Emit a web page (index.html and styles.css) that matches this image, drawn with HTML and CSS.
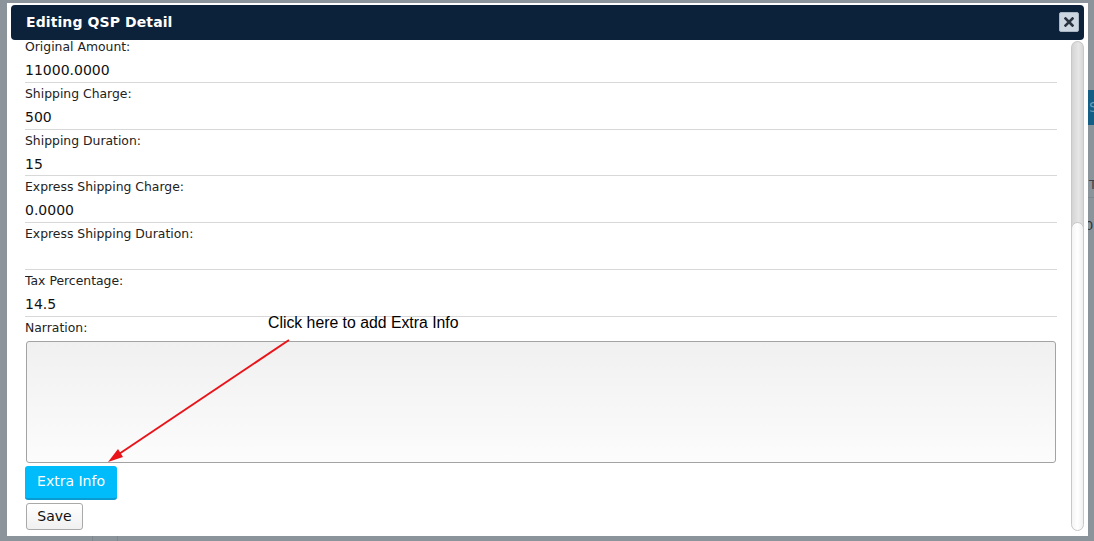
FILE: index.html
```html
<!DOCTYPE html>
<html>
<head>
<meta charset="utf-8">
<link rel="stylesheet" href="styles.css">
</head>
<body>
<div class="backdrop">
  <div class="bg-strip">
    <div class="bg-blue">S</div>
    <div class="bg-t">T</div>
    <div class="bg-o">0</div>
  </div>
  <div class="bg-bottom">
    <span class="seg seg1"></span>
    <span class="seg seg2"></span>
  </div>
</div>

<div class="dialog">
  <div class="titlebar">
    <span class="title">Editing QSP Detail</span>
    <button class="close" aria-label="close">
      <svg width="10" height="10" viewBox="0 0 10 10"><path d="M1.5 1.5 L8.5 8.5 M8.5 1.5 L1.5 8.5" stroke="#2a3440" stroke-width="2.6" stroke-linecap="square"/></svg>
    </button>
  </div>
  <div class="body">
    <div class="content">
      <div class="list">
        <div class="row"><div class="label">Original Amount:</div><div class="value">11000.0000</div></div>
        <div class="row"><div class="label">Shipping Charge:</div><div class="value">500</div></div>
        <div class="row"><div class="label">Shipping Duration:</div><div class="value">15</div></div>
        <div class="row"><div class="label">Express Shipping Charge:</div><div class="value">0.0000</div></div>
        <div class="row"><div class="label">Express Shipping Duration:</div><div class="value"></div></div>
        <div class="row"><div class="label">Tax Percentage:</div><div class="value">14.5</div></div>
        <div class="label">Narration:</div>
        <textarea class="narration"></textarea>
        <button class="btn-extra">Extra Info</button>
        <button class="btn-save">Save</button>
      </div>
    </div>
    <div class="scrollbar">
      <div class="scroll-upper"></div>
      <div class="scroll-thumb"></div>
    </div>
  </div>
</div>

<div class="note">Click here to add Extra Info</div>
<svg class="arrow" width="1094" height="541" viewBox="0 0 1094 541">
  <line x1="289" y1="340" x2="116" y2="456" stroke="#e8141a" stroke-width="2"/>
  <polygon points="108,462 118,449 123,457" fill="#e8141a"/>
</svg>
</body>
</html>
```

FILE: styles.css
```css
html, body {
  margin: 0;
  padding: 0;
}
body {
  width: 1094px;
  height: 541px;
  background: #8b939b;
  position: relative;
  overflow: hidden;
  font-family: "DejaVu Sans", Verdana, sans-serif;
}

.backdrop {
  position: absolute;
  inset: 0;
}
.bg-strip {
  position: absolute;
  left: 1088px;
  top: 0;
  width: 6px;
  height: 541px;
}
.bg-blue {
  margin-top: 90px;
  height: 35px;
  background: #145d85;
  color: #6f9ab2;
  font-size: 14px;
  line-height: 35px;
  padding-left: 1px;
  overflow: hidden;
}
.bg-t {
  margin-top: 52px;
  font-size: 13px;
  color: #3b4148;
  padding-left: 1px;
  height: 20px;
  border-bottom: 1px solid #7f878f;
}
.bg-o {
  margin-top: 20px;
  font-size: 13px;
  color: #2d343a;
  margin-left: -3px;
}
.bg-bottom {
  position: absolute;
  left: 0;
  top: 536px;
  width: 1094px;
  height: 5px;
}
.seg {
  position: absolute;
  top: 0;
  height: 5px;
  background: #7f878f;
}
.seg1 { left: 92px; width: 1px; }
.seg2 { left: 117px; width: 1px; }

.dialog {
  position: absolute;
  left: 7px;
  top: 3px;
  width: 1081px;
  height: 533px;
  background: #fff;
  box-sizing: border-box;
  display: flex;
  flex-direction: column;
}

.titlebar {
  margin: 2px 4px 0 4px;
  height: 35px;
  background: #0c213a;
  border-radius: 4px;
  display: flex;
  align-items: center;
  justify-content: space-between;
  padding: 0 5px 0 15px;
  box-sizing: border-box;
  flex: none;
}
.title {
  color: #fff;
  font-weight: bold;
  font-size: 14px;
  letter-spacing: 0.1px;
  margin-top: -2px;
}
.close {
  width: 20px;
  height: 20px;
  padding: 0;
  margin: 0;
  border: 1px solid #aab6c4;
  border-radius: 2px;
  background: #ccd6e1;
  display: flex;
  align-items: center;
  justify-content: center;
  margin-top: -1px;
}
.close svg { display: block; }

.body {
  flex: 1;
  display: flex;
  min-height: 0;
}
.content {
  width: 1032px;
  margin-left: 18px;
  overflow: hidden;
}
.list {
  margin-top: -4px;
  display: flex;
  flex-direction: column;
  align-items: flex-start;
}
.row {
  width: 1032px;
  height: 46.8px;
  box-sizing: border-box;
  border-bottom: 1px solid #d8d8d8;
}
.label {
  height: 22px;
  line-height: 22px;
  font-size: 12.4px;
  color: #222;
}
.value {
  height: 23.8px;
  line-height: 24px;
  font-size: 14px;
  color: #111;
}
.narration {
  display: block;
  margin: 2.2px 0 0 1px;
  width: 1030px;
  height: 122px;
  box-sizing: border-box;
  border: 1px solid #a3a3a3;
  border-radius: 3px;
  background: linear-gradient(#f0f0f0, #fcfcfc);
  resize: none;
  padding: 0;
}
.btn-extra {
  margin-top: 3px;
  width: 92px;
  height: 34px;
  box-sizing: border-box;
  background: #00bcfa;
  border: 0;
  border-bottom: 2px solid #0a9bd2;
  border-radius: 3px;
  color: #fff;
  font-family: "DejaVu Sans", sans-serif;
  font-size: 14px;
  padding: 0 0 1px 0;
}
.btn-save {
  margin-top: 3px;
  margin-left: 1px;
  width: 57px;
  height: 27px;
  box-sizing: border-box;
  background: linear-gradient(#ffffff, #f0f0f0);
  border: 1px solid #a9a9a9;
  border-radius: 3px;
  color: #111;
  font-family: "DejaVu Sans", sans-serif;
  font-size: 14px;
  padding: 0 0 1px 0;
}

.scrollbar {
  margin: 1px 0 0 14px;
  width: 13px;
  height: 490px;
  position: relative;
  display: flex;
  flex-direction: column;
}
.scroll-upper {
  height: 190px;
  background: linear-gradient(90deg, #d4d4d4, #e6e6e6 60%, #d6d6d6);
  border: 1px solid #c8c8c8;
  border-bottom: 0;
  border-radius: 7px 7px 0 0;
  box-sizing: border-box;
}
.scroll-thumb {
  flex: 1;
  margin-top: -9px;
  background: linear-gradient(90deg, #f4f4f4, #ffffff 50%, #f0f0f0);
  border: 1px solid #c8c8c8;
  border-radius: 7px;
  box-sizing: border-box;
}

.note {
  position: absolute;
  left: 268px;
  top: 313px;
  font-family: "Liberation Sans", Arial, sans-serif;
  font-size: 15.8px;
  color: #000;
  line-height: 20px;
}
.arrow {
  position: absolute;
  left: 0;
  top: 0;
  pointer-events: none;
}
```
